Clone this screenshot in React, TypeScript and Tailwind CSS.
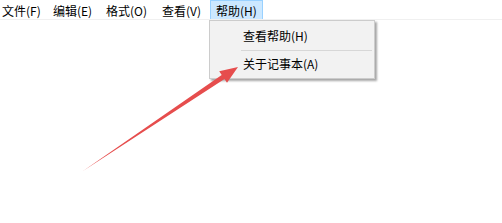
import React from "react";

const font = { fontFamily: '"Noto Sans CJK SC", "Microsoft YaHei", sans-serif' };

export default function App() {
  const items: [string, string][] = [
    ["文件(F)", "w-[51px]"],
    ["编辑(E)", "w-[53px]"],
    ["格式(O)", "w-[56px]"],
    ["查看(V)", "w-[54px]"],
  ];
  return (
    <div className="relative w-[502px] h-[223px] bg-white overflow-hidden text-[12px] text-black" style={font}>
      <div className="flex h-[20px] items-stretch border-b border-[#f0f0f0] ml-[-4px]">
        {items.map(([t, w]) => (
          <div key={t} className={`flex items-center pl-[6px] pt-[2px] leading-none ${w}`}>{t}</div>
        ))}
        <div className="flex items-center w-[53px] pl-[5px] pt-[2px] leading-none bg-[#cce8ff] border border-[#99d1ff] border-b-0">帮助(H)</div>
      </div>
      <div className="absolute left-[209px] top-[20px] w-[166px] bg-[#f2f2f2] border border-[#cccccc] py-[2px] shadow-[2px_2px_2px_rgba(0,0,0,0.35)]">
        <div className="h-[24px] flex items-center pl-[33px] pt-[1px]">查看帮助(H)</div>
        <div className="h-px bg-[#d7d7d7] mt-[3px] mb-[1px] ml-[31px] mr-[2px]" />
        <div className="h-[24px] flex items-center pl-[33px]">关于记事本(A)</div>
      </div>
      <svg className="absolute left-0 top-0" width="502" height="223" viewBox="0 0 502 223">
        <polygon points="83,171 221.7,74.9 219.2,71.2 238,67 227,82.8 224.5,79.1" fill="#e64d4d" />
      </svg>
    </div>
  );
}
